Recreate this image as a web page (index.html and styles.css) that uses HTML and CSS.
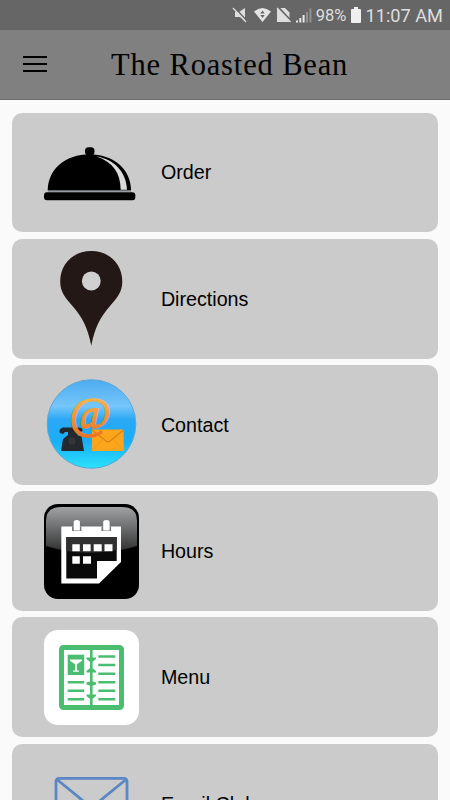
FILE: index.html
```html
<!DOCTYPE html>
<html lang="en">
<head>
    <meta charset="UTF-8">
    <meta name="viewport" content="width=device-width, initial-scale=1.0">
    <title>The Roasted Bean</title>
    <link rel="stylesheet" href="styles.css">
</head>
<body>

<div class="status-bar">
    <svg class="status-icons" width="80" height="30" viewBox="0 0 80 30">
        <!-- muted -->
        <path d="M3 12h4l6-4v13l-5-4H3z" fill="#dedede"/>
        <path d="M2 7l14 15" stroke="#666" stroke-width="1.500"/>
        <path d="M1 8l13 14" stroke="#dedede" stroke-width="1.300"/>
        <!-- wifi -->
        <path d="M22 11.500Q30.500 4.500 39 11.500L30.500 22z" fill="#e4e4e4"/>
        <path d="M28.300 13.500l2.200-3 2.200 3zM28.300 15l2.200 3 2.200-3z" fill="#666"/>
        <!-- no sim -->
        <path d="M45 8h8l4.500 4.500V22H45z" fill="#dedede"/>
        <path d="M46 7L60 22" stroke="#666" stroke-width="2"/>
        <path d="M45 8l13.500 14" stroke="#dedede" stroke-width="1.300"/>
        <!-- signal -->
        <path d="M65 20.500V22.500M68.300 18v4.500M71.600 15v7.500" stroke="#e8e8e8" stroke-width="2"/>
        <path d="M75 12v10.500M78.400 8.500v14" stroke="#929292" stroke-width="2"/>
    </svg>
    <span class="battery-text">98%</span>
    <svg class="battery" width="10" height="16" viewBox="0 0 10 16">
        <path d="M3 0h4v2h2q1 0 1 1v12q0 1-1 1H1q-1 0-1-1V3q0-1 1-1h2z" fill="#efefef"/>
    </svg>
    <span class="time">11:07 AM</span>
</div>

<div class="header">
    <div class="menu-btn"><span></span><span></span><span></span></div>
    <h1>The Roasted Bean</h1>
</div>

<div class="list">
    <div class="card">
        <svg class="icon" viewBox="0 0 95 95">
            <rect x="41" y="22.300" width="9.500" height="8" rx="3.500"/>
            <path d="M43 28h5.500v4H43z"/>
            <path d="M3.700 65.500C3.700 44 22 29.300 45.500 29.300S87 44 87 65.500z"/>
            <path d="M52.500 31.500C69 37 76.500 48 76.700 64.800H83C82.500 47 70 34 52.500 31.500z" fill="#dadada"/>
            <path d="M4 66.300h83" stroke="#8b9096"/>
            <rect x="0" y="67.300" width="91.300" height="8" rx="3"/>
        </svg>
        <span class="label">Order</span>
    </div>

    <div class="card">
        <svg class="icon" viewBox="0 0 95 95">
            <path d="M47.300 0C65 0 78.300 13 78.300 30.500C78.300 41 73 47 66 55C56 66.500 51 76 47.300 94.700C43.500 76 38.500 66.500 28.500 55C21.500 47 16.200 41 16.200 30.500C16.200 13 29.500 0 47.300 0z" fill="#231815"/>
            <circle cx="47.300" cy="30" r="9.400" fill="#d0d0d0"/>
        </svg>
        <span class="label">Directions</span>
    </div>

    <div class="card">
        <svg class="icon" viewBox="0 0 95 95">
            <defs>
                <linearGradient id="sky" x1="0" y1="0" x2="0" y2="1">
                    <stop offset="0" stop-color="#4cabf0"/>
                    <stop offset="0.300" stop-color="#76c6fa"/>
                    <stop offset="0.450" stop-color="#2ba8f6"/>
                    <stop offset="0.700" stop-color="#18aef6"/>
                    <stop offset="1" stop-color="#2ce2fa"/>
                </linearGradient>
                <linearGradient id="amber" x1="0" y1="0" x2="0" y2="1">
                    <stop offset="0" stop-color="#f8c85a"/>
                    <stop offset="1" stop-color="#ea7024"/>
                </linearGradient>
            </defs>
            <circle cx="47.500" cy="47" r="44.300" fill="url(#sky)" stroke="#5aa8d8"/>
            <!-- phone -->
            <path d="M16 56q-2-4 3-5.500h15q5 0 4.500 3.500-3 2-6 1l2 4h3l2.500 15H17l2-12 5-4v-3h-3l-2 2z" fill="#25282d"/>
            <circle cx="28" cy="64" r="3.500" fill="#33363b"/>
            <!-- envelope -->
            <rect x="48" y="52.500" width="31.700" height="21.500" fill="#fba51d"/>
            <path d="M48 53l14 11q2 1.500 4 0l13.500-11" fill="none" stroke="#d9820f" stroke-width="1.200"/>
            <path d="M48 73.500l11-11M79.500 73.500L69 62" stroke="#f29c18"/>
            <text class="at" x="46" y="50.500" text-anchor="middle" fill="url(#amber)" stroke="url(#amber)">@</text>
        </svg>
        <span class="label">Contact</span>
    </div>

    <div class="card">
        <svg class="icon" viewBox="0 0 95 95">
            <defs>
                <linearGradient id="gloss" x1="0" y1="0" x2="0" y2="1">
                    <stop offset="0" stop-color="#a0a2a4"/>
                    <stop offset="1" stop-color="#2c2c2c"/>
                </linearGradient>
            </defs>
            <rect width="95" height="95" rx="14"/>
            <path d="M2 42V17Q2 3 17 3H78Q93 3 93 17V42Q47 56 2 42z" fill="url(#gloss)"/>
            <path d="M17.300 22.600H77V58L55 79.600H17.300z" fill="#fff"/>
            <path d="M22.300 33H72.700V57H53V74.600H22.300z" fill="#0a0a0a"/>
            <path d="M22.300 33H72.700V46Q47 51 22.300 47z" fill="#303030"/>
            <path d="M28 27V22.600h1.500V18q0-2 3.200-2t3.200 2v4.600h1.500V27zM57.500 27V22.600H59V18q0-2 3.300-2t3.300 2v4.600h1.500V27z" fill="#777"/>
            <path d="M29.700 26.500V18q0-2 3.100-2t3.100 2v8.500zM59.200 26.500V18q0-2 3.200-2t3.200 2v8.500z" fill="#fff"/>
            <path d="M28.300 40.200h7.500v7h-7.500zM39 40.200h7.600v7H39zM49.700 40.200h8v7h-8zM60.500 40.200h8v7h-8zM28.300 52.200h7.500v7.600h-7.500zM39 52.200h8v7.600h-8z" fill="#fff"/>
        </svg>
        <span class="label">Hours</span>
    </div>

    <div class="card">
        <svg class="icon" viewBox="0 0 95 95">
            <rect width="95" height="95" rx="14" fill="#fff"/>
            <rect x="17.500" y="17.500" width="60" height="60" rx="2" fill="none" stroke="#4bbd70" stroke-width="5"/>
            <path d="M47.300 18v59" stroke="#4bbd70" stroke-width="2.600"/>
            <path d="M42.500 27.500h9.500v1.500l-3 2.500h-3.500l-3-2.500zM45.500 38.500h3.500l3 2.500v1.500h-9.500V41zM45.500 51.500h3.500l3 1v2l-3 1h-3.500l-3-1v-2zM42.500 64.500h9.500V66l-3 2.500h-3.500l-3-2.500z" fill="#4bbd70"/>
            <rect x="23.700" y="24.700" width="16.500" height="20.300" fill="#4bbd70"/>
            <path d="M26 29.500h12v1.300l-5.100 3.500v6.200h2v1.200h-5.800v-1.200h2v-6.200l-5.100-3.500z" fill="#fff"/>
            <path d="M23.700 52.300h16.500M23.700 60.700h16.500M23.700 69.300h16.500M54.300 26.500h17M54.300 35h17M54.300 43.700h17M54.300 52.300h17M54.300 60.700h17M54.300 69.300h17" stroke="#4bbd70" stroke-width="2.600"/>
        </svg>
        <span class="label">Menu</span>
    </div>

    <div class="card">
        <svg class="icon" viewBox="0 0 95 95">
            <g fill="none" stroke="#5b87c5" stroke-width="2.800">
                <rect x="12" y="22.300" width="71" height="51" rx="3"/>
                <path d="M13 23.500L43 48q4.500 4 9 0L82 23.500M13 72l24-28M82 72L58 44"/>
            </g>
        </svg>
        <span class="label">Email Club</span>
    </div>
</div>

</body>
</html>
```
FILE: styles.css
```css
body {
    margin: 0;
    height: 800px;
    overflow: hidden;
    background-color: #fafafa;
    color: #000;
    font-family: "Liberation Sans", Arial, sans-serif;
}
.status-bar {
    height: 30px;
    padding-right: 7px;
    background-color: #666;
    color: #dedede;
    font-family: Roboto, sans-serif;
    display: flex;
    align-items: center;
    justify-content: flex-end;
}
.status-icons {
    margin-right: 4px;
}
.battery-text {
    font-size: 16.5px;
    line-height: 30px;
    padding-top: 2px;
}
.battery {
    margin: 0 4px 0 5px;
}
.time {
    font-size: 18.2px;
    line-height: 30px;
    padding-top: 2px;
}
.header {
    height: 70px;
    box-sizing: border-box;
    padding-left: 23px;
    background-color: #808080;
    border-bottom: 1px solid #6c6c6c;
    display: flex;
    align-items: center;
}
.menu-btn {
    width: 24px;
    margin-bottom: 2px;
    display: flex;
    flex-direction: column;
    gap: 5px;
}
.menu-btn span {
    height: 2px;
    background-color: #000;
}
h1 {
    margin: 0 0 0 64px;
    padding-top: 2px;
    font-family: "Liberation Serif", "Times New Roman", serif;
    font-size: 30.5px;
    font-weight: normal;
    letter-spacing: 0.85px;
    white-space: nowrap;
}
.list {
    padding: 12.5px 12.5px 0 12.4px;
    display: flex;
    flex-direction: column;
    gap: 6.25px;
}
.card {
    height: 119.9px;
    margin-bottom: 0.1px;
    box-sizing: border-box;
    padding-left: 31.5px;
    border-radius: 10px;
    background-color: #cbcbcb;
    display: flex;
    align-items: center;
    font-size: 19.7px;
}
.icon {
    width: 95px;
    height: 95px;
    margin-right: 22px;
}
.label {
    padding-top: 1px;
}
.at {
    font: italic 45px "Liberation Serif", serif;
    stroke-width: 1.6px;
}
```
